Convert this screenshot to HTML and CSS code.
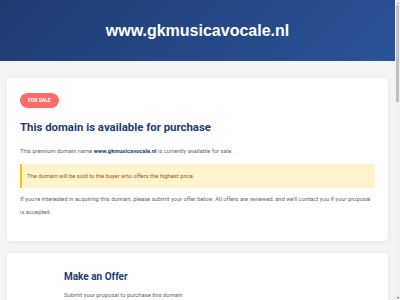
FILE: index.html
```html
<!DOCTYPE html>
<html lang="en">
<head>
  <meta charset="UTF-8" />
  <meta name="viewport" content="width=device-width, initial-scale=1.0" />
  <title>www.gkmusicavocale.nl is for sale</title>
  <link rel="stylesheet" href="styles.css">
</head>
<body>
  <header class="hero">
    <h1>www.gkmusicavocale.nl</h1>
  </header>

  <main class="container">
    <section class="card">
      <span class="badge">For Sale</span>
      <h2>This domain is available for purchase</h2>
      <p>This premium domain name <strong>www.gkmusicavocale.nl</strong> is currently available for sale.</p>
      <div class="notice">The domain will be sold to the buyer who offers the highest price.</div>
      <p>If you're interested in acquiring this domain, please submit your offer below. All offers are reviewed, and we'll contact you if your proposal is accepted.</p>
    </section>

    <section class="card offer">
      <div class="offer-inner">
        <h2>Make an Offer</h2>
        <p>Submit your proposal to purchase this domain</p>
        <form class="offer-form">
          <label>Your name<input type="text"></label>
          <label>Email address<input type="email"></label>
          <label>Your offer (EUR)<input type="number"></label>
          <label>Message<textarea rows="4"></textarea></label>
          <button type="button">Submit Offer</button>
        </form>
      </div>
    </section>
  </main>

  <footer class="footer">&copy; www.gkmusicavocale.nl</footer>

  <!-- page scrollbar, drawn as the thin overlay the screenshot shows -->
  <div class="scrollbar" aria-hidden="true">
    <span class="arrow">&#9652;</span>
    <div class="thumb"></div>
    <span class="arrow down">&#9662;</span>
  </div>
</body>
</html>
```

FILE: styles.css
```css
:root {
  --blue-dark: #1e3c72;
  --blue: #2a5298;
  --text: #666;
  --font-main: 'Roboto', 'Liberation Sans', sans-serif;
}

body {
  margin: 0 5px 0 0;
  font-family: var(--font-main);
  background-color: #f4f4f4;
  color: var(--text);
}

.hero {
  height: 61px;
  display: flex;
  justify-content: center;
  align-items: center;
  background: linear-gradient(135deg, var(--blue-dark), var(--blue));
}

.hero h1 {
  margin: 0;
  font-family: 'Liberation Sans', Arial, sans-serif;
  font-size: 16px;
  font-weight: bold;
  color: white;
}

.container {
  padding: 17px 7px;
  display: flex;
  flex-direction: column;
  gap: 12px;
}

.card {
  background: white;
  border-radius: 4px;
  box-shadow: 0 1px 4px rgba(0,0,0,0.08);
  padding: 15px 13px 22px;
}

.badge {
  display: block;
  width: fit-content;
  background-color: #ff6b6b;
  color: white;
  font-size: 5px;
  line-height: 5px;
  font-weight: bold;
  text-transform: uppercase;
  padding: 5px 8px;
  border-radius: 8px;
}

.card h2 {
  margin: 12px 0 11px;
  font-size: 11.4px;
  line-height: 14px;
  color: var(--blue-dark);
}

.card p {
  margin: 0;
  font-size: 5.8px;
  line-height: 13px;
}

.card strong {
  color: var(--blue-dark);
}

.notice {
  margin: 6px 0 5px;
  padding: 6px 7px 6px 5px;
  background-color: #fff3cd;
  border-left: 2px solid #ffc107;
  color: #856404;
  font-size: 5.8px;
  line-height: 12px;
}

.offer {
  padding-top: 18px;
}

.offer-inner {
  max-width: 267px;
  margin: 0 auto;
}

.offer h2 {
  margin: 0 0 6px;
  font-size: 10px;
  line-height: 12px;
}

.offer-form {
  display: flex;
  flex-direction: column;
  gap: 10px;
  margin-top: 14px;
}

.offer-form label {
  display: flex;
  flex-direction: column;
  gap: 4px;
  font-size: 6px;
  color: #333;
}

.offer-form input,
.offer-form textarea {
  border: 1px solid #ddd;
  border-radius: 3px;
  padding: 6px;
  font-size: 6px;
}

.offer-form button {
  border: none;
  border-radius: 3px;
  padding: 8px;
  background: var(--blue);
  color: white;
  font-size: 7px;
  font-weight: bold;
}

.footer {
  padding: 20px 0 400px;
  text-align: center;
  font-size: 6px;
  color: #888;
}

.scrollbar {
  position: fixed;
  top: 0;
  right: 0;
  width: 5px;
  height: 100vh;
  display: flex;
  flex-direction: column;
  align-items: center;
  background: #f1f1f1;
}

.scrollbar .arrow {
  height: 5px;
  font-size: 4px;
  line-height: 5px;
  color: #a3a3a3;
}

.scrollbar .thumb {
  width: 3px;
  height: 97px;
  background: #c1c1c1;
}

.scrollbar .down {
  margin-top: auto;
  color: #505050;
}
```
